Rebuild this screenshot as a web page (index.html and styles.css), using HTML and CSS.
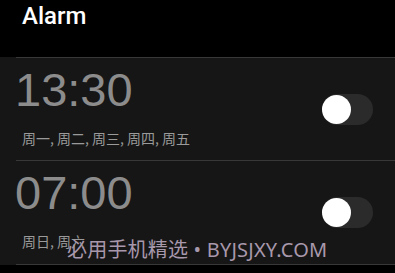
FILE: index.html
```html
<!DOCTYPE html>
<html lang="zh">
<head>
<meta charset="utf-8">
<title>Alarm</title>
<link rel="stylesheet" href="styles.css">
</head>
<body>
<div class="app">
  <header class="header">
    <h1 class="title">Alarm</h1>
  </header>
  <main class="list">
    <div class="row">
      <div class="info">
        <div class="time">13:30</div>
        <div class="days">周一, 周二, 周三, 周四, 周五</div>
      </div>
      <div class="toggle"><span class="knob"></span></div>
    </div>
    <div class="row">
      <div class="info">
        <div class="time">07:00</div>
        <div class="days">周日, 周六</div>
      </div>
      <div class="toggle"><span class="knob"></span></div>
    </div>
    <div class="row-end"></div>
  </main>
  <div class="watermark">必用手机精选 • BYJSJXY.COM</div>
</div>
</body>
</html>
```

FILE: styles.css
```css
html, body {
  margin: 0;
  padding: 0;
  background: #000;
}
.app {
  position: relative;
  width: 395px;
  height: 273px;
  overflow: hidden;
  background: #000;
  font-family: "Liberation Sans", Arial, sans-serif;
}
.header {
  height: 57px;
  box-sizing: border-box;
  padding-left: 22px;
}
.title {
  margin: 0;
  padding-top: 2px;
  font-family: Roboto, "Liberation Sans", sans-serif;
  font-weight: 500;
  font-size: 24px;
  line-height: 28px;
  color: #fff;
}
.list {
  background: #161616;
  padding-bottom: 0;
}
.row {
  display: flex;
  justify-content: space-between;
  margin-left: 16px;
  padding-right: 22px;
  height: 103px;
  box-sizing: border-box;
  border-top: 1px solid #383838;
}
.info {
  display: flex;
  flex-direction: column;
  padding-top: 8px;
}
.time {
  margin-left: -1px;
  font-size: 47px;
  line-height: 47px;
  color: #8c8c8c;
}
.days {
  margin-top: 15px;
  padding-left: 6px;
  font-family: "Noto Sans CJK SC", "Noto Sans", sans-serif;
  font-size: 14px;
  line-height: 20px;
  color: #9a9a9a;
}
.toggle {
  align-self: center;
  position: relative;
  width: 51px;
  height: 31px;
  border-radius: 16px;
  background: #2b2b2b;
}
.knob {
  position: absolute;
  left: 0;
  top: 1px;
  width: 29px;
  height: 29px;
  border-radius: 50%;
  background: #fff;
}
.row-end {
  margin-left: 16px;
  border-top: 1px solid #161616;
  height: 1px;
  background: #383838;
}
.watermark {
  position: absolute;
  left: 67px;
  top: 240px;
  font-family: "Noto Sans", "Noto Sans CJK SC", sans-serif;
  font-size: 20px;
  line-height: 20px;
  letter-spacing: 0.2px;
  color: #a898ac;
  white-space: nowrap;
}
```
